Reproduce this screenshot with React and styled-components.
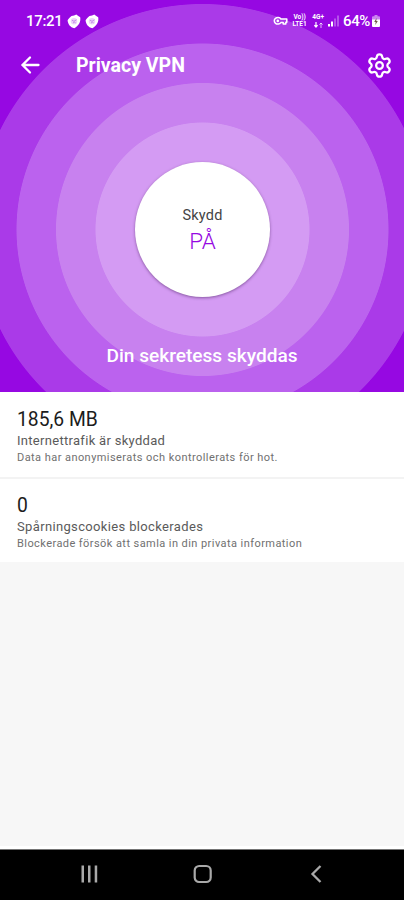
/* ICONS */
import { Settings } from 'lucide-react'

/* STYLED-COMPONENTS */
import styled, { createGlobalStyle } from 'styled-components'

/* COLORS */
const colors = {
  Primary: '#9608e2',
  RingOne: '#d49bf3',
  RingTwo: '#c881ef',
  RingThree: '#bb62ee',
  RingFour: '#aa3ae8',
  Light: '#ffffff',
  Screen: '#f7f7f7',
  Nav: '#000000',
}

/* GLOBAL */
const GlobalStyle = createGlobalStyle`
  * {
    box-sizing: border-box;
  }

  body {
    margin: 0;
    font-family: Roboto, 'Liberation Sans', sans-serif;
  }

  p, h1, h2 {
    margin: 0;
    font-weight: 400;
    white-space: nowrap;
  }

  svg {
    display: block;
    flex: none;
  }
`

/* SCREEN */
const Screen = styled.div`
  height: 900px;

  display: flex;
  flex-direction: column;

  overflow: hidden;
  background-color: ${colors.Screen};
`

/* HERO */
const Hero = styled.section`
  height: 392px;
  flex: none;

  display: flex;
  flex-direction: column;

  overflow: hidden;
  background: radial-gradient(
    circle at 202.5px 229.5px,
    ${colors.RingOne} 106.6px,
    ${colors.RingTwo} 107.4px,
    ${colors.RingTwo} 146.1px,
    ${colors.RingThree} 146.9px,
    ${colors.RingThree} 185.6px,
    ${colors.RingFour} 186.4px,
    ${colors.RingFour} 225.1px,
    ${colors.Primary} 225.9px
  );
  color: ${colors.Light};
`

/* STATUS BAR */
const StatusBar = styled.div`
  height: 42px;

  display: flex;
  justify-content: space-between;
  align-items: center;

  padding: 0 24px 0 26px;
`

const StatusGroup = styled.div`
  display: flex;
  align-items: center;
  gap: ${({ $gap }) => $gap}px;
`

const StatusText = styled.p`
  font-size: 15px;
  font-weight: 500;
  line-height: 18px;
  letter-spacing: ${({ $spacing }) => $spacing || 0}px;
`

const Network = styled.div`
  width: ${({ $width }) => $width}px;

  display: flex;
  flex-direction: column;
  align-items: center;

  font-size: 6.5px;
  font-weight: 700;
  line-height: 7px;
  white-space: nowrap;

  & svg {
    margin-top: 1px;
  }
`

/* TOOLBAR */
const Toolbar = styled.header`
  height: 46px;

  display: flex;
  align-items: center;

  padding: 0 11px 0 18px;

  & h1 {
    flex: 1;
    margin-left: 34px;
    padding-top: 2px;
    font-size: 19.5px;
    font-weight: 700;
    line-height: 24px;
  }
`

const IconButton = styled.button`
  display: flex;
  padding: 0;
  border: none;
  background: none;
  color: inherit;
`

/* PROTECTION */
const Protection = styled.button`
  width: 135px;
  height: 135px;
  flex: none;

  display: flex;
  flex-direction: column;
  align-items: center;

  margin: 74px 0 0 135px;
  padding: 45px 0 0;

  border: none;
  border-radius: 50%;
  background-color: ${colors.Light};
  box-shadow: 0 1px 3px rgba(60, 20, 80, 0.5);
  font-family: inherit;
`

const ProtectionLabel = styled.p`
  color: #444444;
  font-size: 14.5px;
  line-height: 18px;
  letter-spacing: 0.2px;
`

const ProtectionState = styled.p`
  margin-top: 3px;
  color: ${colors.Primary};
  font-size: 22.5px;
  font-weight: 300;
  line-height: 26px;
`

const Message = styled.p`
  margin-top: 48px;
  text-align: center;
  font-size: 19.1px;
  font-weight: 500;
  line-height: 22px;
`

/* STAT */
const Stat = styled.section`
  height: ${({ $height }) => $height}px;
  flex: none;

  padding: ${({ $top }) => $top}px 17px 0;

  background-color: ${colors.Light};
  border-bottom: ${({ $divider }) => ($divider ? '2px solid #f3f3f3' : 'none')};

  & h2 {
    color: #1c1c1c;
    font-size: 19.3px;
    line-height: 22px;
  }
`

const StatTitle = styled.p`
  margin-top: 2px;
  color: #5a5a5a;
  font-size: 13px;
  line-height: 16px;
  letter-spacing: ${({ $spacing }) => $spacing}px;
`

const StatDetail = styled.p`
  margin-top: 2px;
  color: #707070;
  font-size: 11px;
  line-height: 14px;
  letter-spacing: ${({ $spacing }) => $spacing}px;
`

/* NAVIGATION */
const Navigation = styled.nav`
  height: 51px;
  flex: none;

  display: flex;
  justify-content: space-between;
  align-items: center;

  margin-top: auto;
  padding: 0 77px 3px 78px;

  background-color: ${colors.Nav};
  border-top: 1px solid #757575;
  box-shadow: 0 -3px 0 ${colors.Light};
`

/* SHIELD */
function ShieldIcon() {
  return (
    <svg width="14" height="15" viewBox="0 0 14 15" fill="none">
      <path
        d="M9.300.5c1.400 1.200 2.700 1.900 3.900 2.800.8 4.200-1.300 8.500-5.900 10.900C3.300 13.200.9 10.300.6 6.200 1.800 4.800 2.800 3.100 4.500 2 6.500 1.900 7.800 1.300 9.300.5z"
        fill="#fff"
      />
      <circle cx="7" cy="7.300" r="3.200" fill="#ecd2fa" />
      <path d="M5 6.200l2 1.100 2.400-1.500M6 9l1.300-.8 1.300.6" stroke="#c58be8" />
    </svg>
  )
}

/* KEY */
function KeyIcon() {
  return (
    <svg width="15" height="10" viewBox="0 0 15 10" fill="none">
      <path
        d="M7.900 3h5.900v3.200h-1v1.900h-2.600V6.600H7.900A3.600 3.300 0 1 1 7.900 3z"
        stroke="#fff"
        strokeWidth="1.500"
        strokeLinejoin="round"
      />
      <circle cx="4.800" cy="4.900" r="1.300" fill="#fff" />
    </svg>
  )
}

/* DATA ARROWS */
function ArrowsIcon() {
  return (
    <svg width="9" height="6" viewBox="0 0 9 6" stroke="#fff" fill="none">
      <path d="M2 0v5M.4 3.200L2 5l1.600-1.800" strokeWidth="1.200" />
      <path d="M7 6V1M5.400 2.600L7 1l1.600 1.600" opacity=".7" />
    </svg>
  )
}

/* SIGNAL */
function SignalIcon() {
  return (
    <svg width="12" height="12" viewBox="0 0 12 12" fill="#fff">
      <rect x="0" y="9" width="2" height="2.500" />
      <rect x="3" y="6.500" width="2" height="5" />
      <rect x="6" y="3.500" width="2" height="8" opacity=".3" />
      <rect x="9" y="0.500" width="2" height="11" opacity=".3" />
    </svg>
  )
}

/* BATTERY */
function BatteryIcon() {
  return (
    <svg width="8" height="12" viewBox="0 0 8 12">
      <path
        d="M2.500 0h3v1.200H7a1 1 0 0 1 1 1V5H0V2.200a1 1 0 0 1 1-1h1.500z"
        fill="#fff"
        opacity=".5"
      />
      <path d="M0 4.500h8V11a1 1 0 0 1-1 1H1a1 1 0 0 1-1-1z" fill="#fff" />
      <path d="M4.600 3L2.200 7h1.500l-.4 3L5.800 6H4.300z" fill="#6f5a45" />
    </svg>
  )
}

/* BACK */
function BackIcon() {
  return (
    <svg width="24" height="24" viewBox="0 0 24 24" fill="none">
      <path
        d="M20.500 12H5M12 4.500L4.500 12l7.500 7.500"
        stroke="#fff"
        strokeWidth="2.300"
        strokeLinecap="round"
      />
    </svg>
  )
}

/* APP */
function App() {
  return (
    <>
      <GlobalStyle />
      <Screen>
        {/* HERO */}
        <Hero>
          <StatusBar>
            <StatusGroup $gap={4}>
              <StatusText $spacing={-0.3}>17:21</StatusText>
              <ShieldIcon />
              <ShieldIcon />
            </StatusGroup>

            <StatusGroup $gap={3}>
              <KeyIcon />
              <Network $width={17}>
                <span>Vo))</span>
                <span>LTE1</span>
              </Network>
              <Network $width={14}>
                <span>4G+</span>
                <ArrowsIcon />
              </Network>
              <SignalIcon />
              <StatusGroup $gap={2}>
                <StatusText $spacing={-0.4}>64%</StatusText>
                <BatteryIcon />
              </StatusGroup>
            </StatusGroup>
          </StatusBar>

          <Toolbar>
            <IconButton aria-label="Tillbaka">
              <BackIcon />
            </IconButton>
            <h1>Privacy VPN</h1>
            <IconButton aria-label="Inställningar">
              <Settings size={27} strokeWidth={2} />
            </IconButton>
          </Toolbar>

          <Protection>
            <ProtectionLabel>Skydd</ProtectionLabel>
            <ProtectionState>PÅ</ProtectionState>
          </Protection>

          <Message>Din sekretess skyddas</Message>
        </Hero>

        {/* TRAFFIC */}
        <Stat $height={87} $top={17} $divider>
          <h2>185,6 MB</h2>
          <StatTitle $spacing={0.3}>Internettrafik är skyddad</StatTitle>
          <StatDetail $spacing={0.44}>
            Data har anonymiserats och kontrollerats för hot.
          </StatDetail>
        </Stat>

        {/* COOKIES */}
        <Stat $height={83} $top={16}>
          <h2>0</h2>
          <StatTitle $spacing={0.35}>Spårningscookies blockerades</StatTitle>
          <StatDetail $spacing={0.43}>
            Blockerade försök att samla in din privata information
          </StatDetail>
        </Stat>

        {/* NAVIGATION */}
        <Navigation>
          <svg width="22" height="22" viewBox="0 0 22 22" fill="#a9a9a9">
            <rect x="3.500" y="2.500" width="2.500" height="17" />
            <rect x="10" y="2.500" width="2.500" height="17" />
            <rect x="16.700" y="2.500" width="2.500" height="17" />
          </svg>
          <svg width="22" height="22" viewBox="0 0 22 22" fill="none">
            <rect
              x="2.700"
              y="3"
              width="16"
              height="16"
              rx="4.500"
              stroke="#a9a9a9"
              strokeWidth="2.200"
            />
          </svg>
          <svg width="22" height="22" viewBox="0 0 22 22" fill="none">
            <path
              d="M15.500 3L7.500 11l8 8"
              stroke="#a9a9a9"
              strokeWidth="2.300"
            />
          </svg>
        </Navigation>
      </Screen>
    </>
  )
}

export default App
